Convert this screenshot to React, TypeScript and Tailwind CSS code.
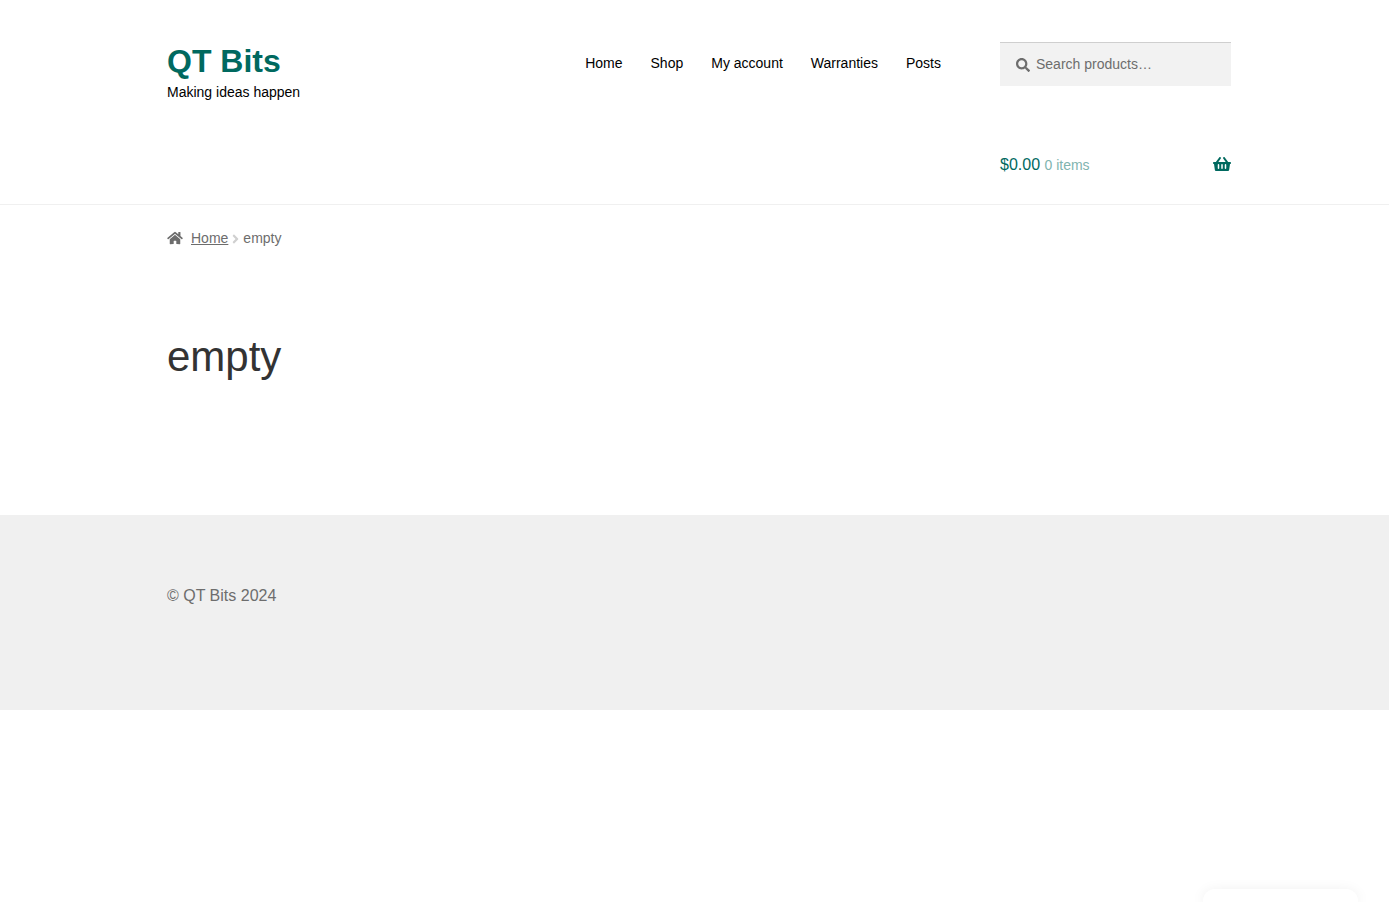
import { useState } from "react";
import {
  FaAngleRight,
  FaHome,
  FaSearch,
  FaShoppingBasket,
} from "react-icons/fa";

const NAV_ITEMS = ["Home", "Shop", "My account", "Warranties", "Posts"];

export default function App() {
  return (
    <div className="bg-white font-['Liberation_Sans',Arial,sans-serif] text-base text-[#6d6d6d]">
      <Header />
      <main className="mx-auto box-content max-w-[1064px] pb-[133px] pl-[9px]">
        <Breadcrumb />
        <h1 className="mt-[81px] text-[42px] leading-[51px] text-[#333333]">
          empty
        </h1>
      </main>
      <footer className="bg-[#f0f0f0] pt-[69px] pb-[102px]">
        <div className="mx-auto box-content max-w-[1064px] pl-[9px] leading-6">
          © QT Bits 2024
        </div>
      </footer>
      <ChatPanel />
    </div>
  );
}

function Header() {
  return (
    <header className="border-b border-[#f0f0f0]">
      <div className="mx-auto box-content flex max-w-[1064px] items-start pt-[42px] pb-[27px] pl-[9px]">
        <div>
          <a
            href="#"
            className="block text-[32px] leading-[39px] font-bold text-[#00695f]"
          >
            QT Bits
          </a>
          <p className="text-sm leading-[22px] text-black">
            Making ideas happen
          </p>
        </div>
        <nav aria-label="Primary" className="mr-[59px] ml-auto pt-[11px]">
          <ul className="flex gap-7 text-sm text-black">
            {NAV_ITEMS.map((item) => (
              <li key={item}>
                <a href="#">{item}</a>
              </li>
            ))}
          </ul>
        </nav>
        <div className="w-[231px] shrink-0">
          <ProductSearch />
          <a
            href="#"
            className="mt-[67px] flex h-6 items-center text-[#00695f]"
          >
            <span>
              $0.00 <span className="text-sm text-[#7fb4af]">0 items</span>
            </span>
            <FaShoppingBasket className="mb-0.5 ml-auto h-4 w-[18px]" />
          </a>
        </div>
      </div>
    </header>
  );
}

function ProductSearch() {
  const [query, setQuery] = useState("");

  return (
    <form
      role="search"
      onSubmit={(event) => event.preventDefault()}
      className="flex h-11 items-center gap-1.5 border-t border-[#cfcfcf] bg-[#f2f2f2] px-4 pb-0.5"
    >
      <FaSearch className="mt-0.5 size-3.5 shrink-0 text-[#6d6d6d]" />
      <input
        type="search"
        aria-label="Search for products"
        placeholder="Search products…"
        value={query}
        onChange={(event) => setQuery(event.target.value)}
        className="w-full bg-transparent text-sm text-[#43454b] outline-none placeholder:text-[#6d6d6d]"
      />
    </form>
  );
}

function Breadcrumb() {
  return (
    <nav
      aria-label="breadcrumbs"
      className="flex items-center pt-[21px] text-sm leading-6"
    >
      <FaHome className="mr-2 h-3.5 w-4" />
      <a href="#" className="underline">
        Home
      </a>
      <FaAngleRight className="mx-[3px] mt-0.5 h-3.5 w-[9px] text-[#d0d0d0]" />
      <span>empty</span>
    </nav>
  );
}

// only the top edge of the panel peeks in from below the window
function ChatPanel() {
  return (
    <div className="fixed right-[31px] bottom-0 h-[13px] w-[155px] rounded-t-xl bg-white shadow-[0_2px_14px_rgba(0,0,0,0.08)]" />
  );
}
